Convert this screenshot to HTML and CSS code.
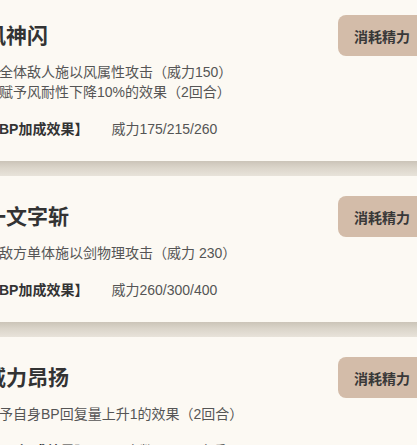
FILE: index.html
```html
<!DOCTYPE html>
<html lang="zh-CN">
<head>
<meta charset="utf-8">
<title>技能</title>
<link rel="stylesheet" href="styles.css">
</head>
<body>
<div class="list">
  <section class="card">
    <div class="card-head">
      <h2 class="skill-name">风神闪</h2>
      <span class="cost-btn">消耗精力</span>
    </div>
    <div class="desc">
      <p>对全体敌人施以风属性攻击（威力150）</p>
      <p>并赋予风耐性下降10%的效果（2回合）</p>
    </div>
    <div class="bp"><span class="bp-label">【BP加成效果】</span><span class="bp-value">威力175/215/260</span></div>
  </section>
  <div class="sep"></div>
  <section class="card">
    <div class="card-head">
      <h2 class="skill-name">一文字斩</h2>
      <span class="cost-btn">消耗精力</span>
    </div>
    <div class="desc">
      <p>对敌方单体施以剑物理攻击（威力 230）</p>
    </div>
    <div class="bp"><span class="bp-label">【BP加成效果】</span><span class="bp-value">威力260/300/400</span></div>
  </section>
  <div class="sep"></div>
  <section class="card">
    <div class="card-head">
      <h2 class="skill-name">威力昂扬</h2>
      <span class="cost-btn">消耗精力</span>
    </div>
    <div class="desc">
      <p>赋予自身BP回复量上升1的效果（2回合）</p>
    </div>
    <div class="bp"><span class="bp-label">【BP加成效果】</span><span class="bp-value">回合数2/3/4回合后，HP</span></div>
  </section>
</div>
</body>
</html>
```
FILE: styles.css
```css
html, body {
  margin: 0;
  padding: 0;
}
body {
  background: #fcf9f3;
  overflow: hidden;
  font-family: "Liberation Sans", "Noto Sans CJK SC", sans-serif;
  color: #333;
}
.list {
  margin-top: -5px;
  margin-left: -15px;
  width: 470px;
}
.card {
  padding: 20px 29px 22px 0;
  background: #fcf9f3;
}
.card-head {
  display: flex;
  align-items: center;
  justify-content: space-between;
  height: 41px;
}
.skill-name {
  margin: 0;
  font-size: 21px;
  font-weight: bold;
  line-height: 28px;
  color: #333;
}
.cost-btn {
  display: flex;
  align-items: center;
  height: 41px;
  padding: 0 16px;
  border-radius: 8px;
  background: #d3bca9;
  color: #383838;
  font-size: 14px;
  font-weight: bold;
}
.desc {
  margin-top: 6px;
}
.desc p {
  margin: 0;
  font-size: 14px;
  line-height: 20px;
  color: #555;
}
.bp {
  margin-top: 17px;
  display: flex;
  gap: 23px;
  font-size: 14px;
  line-height: 20px;
}
.bp-label {
  font-weight: bold;
  color: #333;
}
.bp-value {
  color: #555;
}
.sep {
  height: 15px;
  background: linear-gradient(to bottom, #cbc4b8 0%, #dbd5ca 45%, #e8e3da 100%);
}
```
